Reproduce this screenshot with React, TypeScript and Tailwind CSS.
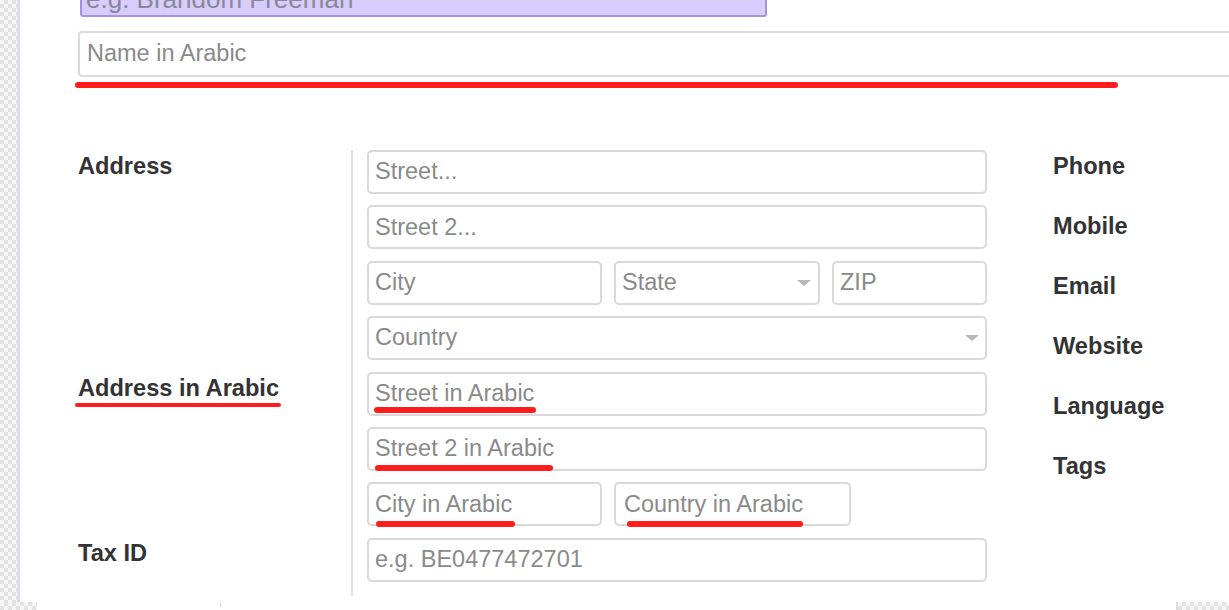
import React from "react";

const checker =
  "bg-[repeating-conic-gradient(#e3e3e3_0%_25%,#f6f6f6_0%_50%)] bg-[length:8px_8px]";

function Arrow() {
  return (
    <svg width="14" height="6" viewBox="0 0 14 6" className="shrink-0">
      <polygon points="0,0 14,0 7,6" fill="#b8b8b8" />
    </svg>
  );
}

function Mark({ className }: { className: string }) {
  return <div className={`absolute h-[6px] rounded-full bg-[#ff1c1c] ${className}`} />;
}

function Field({
  text,
  className = "",
  children,
}: {
  text: string;
  className?: string;
  children?: React.ReactNode;
}) {
  return (
    <div
      className={`relative flex h-[44px] shrink-0 items-center justify-between rounded-[5px] border-2 border-[#d9d9d9] bg-white pl-[6px] pr-[6px] text-[23.5px] leading-none text-[#8a8a8a] ${className}`}
    >
      <span className="whitespace-nowrap">{text}</span>
      {children}
    </div>
  );
}

function Label({ children }: { children: React.ReactNode }) {
  return (
    <div className="whitespace-nowrap text-[23.6px] font-bold leading-[32px] text-[#333]">
      {children}
    </div>
  );
}

export default function App() {
  return (
    <div className="flex h-[610px] w-[1229px] flex-col overflow-hidden bg-white font-['Liberation_Sans',Arial,sans-serif]">
      <div className="flex h-[602px]">
        <div className={`w-[20px] shrink-0 border-r-[3px] border-[#dcdce8] ${checker}`} />

        <main className="flex-1 overflow-hidden pl-[58px]">
          <div className="ml-[2px] mt-[-29px] flex h-[46px] w-[687px] items-end rounded-[3px] border-2 border-[#a592e4] bg-[#d8ccfd] pb-[3px] pl-[4px] text-[26px] leading-[26px] text-[#8a8898]">
            e.g. Brandom Freeman
          </div>

          <div className="mt-[14px] flex h-[46px] w-[1200px] items-center rounded-[4px] border-2 border-[#dadada] pl-[7px] text-[23.5px] text-[#8a8a8a]">
            Name in Arabic
          </div>
          <div className="ml-[-3px] mt-[5px] h-[6px] w-[1043px] rounded-full bg-[#ff1c1c]" />

          <section className="mt-[62px] flex">
            <div className="flex w-[273px] shrink-0 flex-col">
              <Label>Address</Label>
              <div className="mt-[190px]">
                <Label>Address in Arabic</Label>
              </div>
              <div className="ml-[-3px] mt-[-1px] h-[4px] w-[206px] rounded-full bg-[#ff1c1c]" />
              <div className="mt-[130px]">
                <Label>Tax ID</Label>
              </div>
            </div>

            <div className="flex w-[636px] shrink-0 flex-col gap-[11.4px] border-l-2 border-[#e2e2e2] pb-[14px] pl-[14px]">
              <Field text="Street..." />
              <Field text="Street 2..." />
              <div className="flex gap-[12px]">
                <Field text="City" className="w-[235px]" />
                <Field text="State" className="w-[206px] pr-[7px]">
                  <Arrow />
                </Field>
                <Field text="ZIP" className="w-[155px]" />
              </div>
              <Field text="Country">
                <Arrow />
              </Field>
              <Field text="Street in Arabic">
                <Mark className="bottom-[1px] left-[5px] w-[162px]" />
              </Field>
              <Field text="Street 2 in Arabic">
                <Mark className="bottom-[-2px] left-[6px] w-[178px]" />
              </Field>
              <div className="flex gap-[12px]">
                <Field text="City in Arabic" className="w-[235px]">
                  <Mark className="bottom-[-3px] left-[7px] w-[139px]" />
                </Field>
                <Field text="Country in Arabic" className="w-[237px] pl-[8px]">
                  <Mark className="bottom-[-3px] left-[11px] w-[176px]" />
                </Field>
              </div>
              <Field text="e.g. BE0477472701" />
            </div>

            <div className="ml-[66px] flex flex-col gap-[28px]">
              <Label>Phone</Label>
              <Label>Mobile</Label>
              <Label>Email</Label>
              <Label>Website</Label>
              <Label>Language</Label>
              <Label>Tags</Label>
            </div>
          </section>
        </main>
      </div>

      <div className="flex h-[8px]">
        <div className={`w-[37px] ${checker}`} />
        <div className="relative flex-1 bg-white">
          <div className="absolute left-[183px] top-[1px] h-[4px] w-px bg-[#d0d0d0]" />
        </div>
        <div className={`w-[53px] border-l-2 border-[#dcdce8] ${checker}`} />
      </div>
    </div>
  );
}
